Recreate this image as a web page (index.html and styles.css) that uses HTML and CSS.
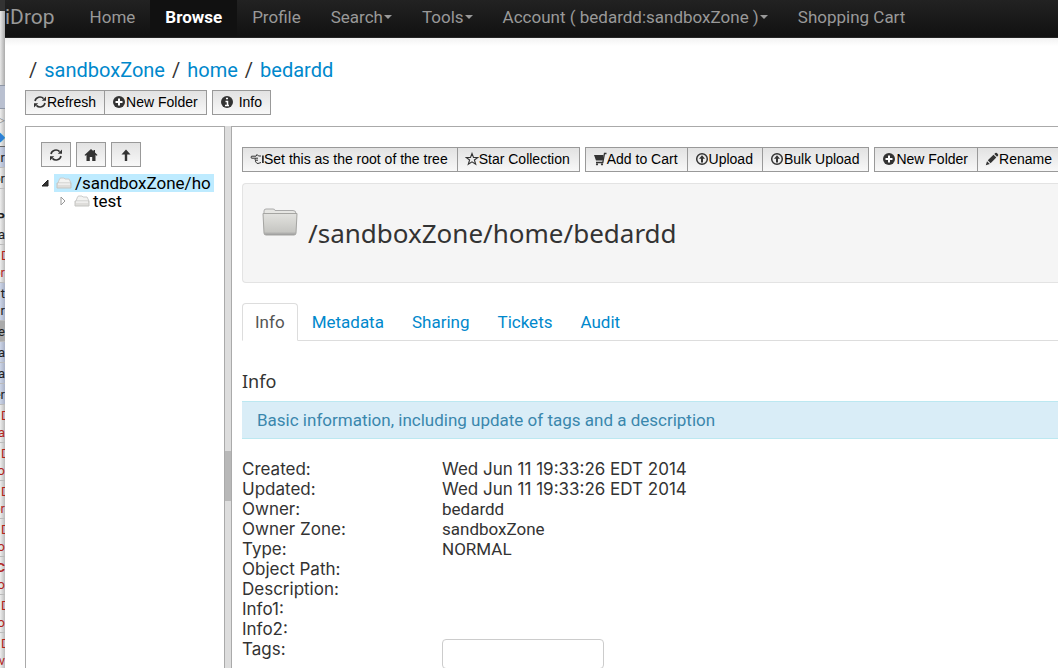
FILE: index.html
```html
<!DOCTYPE html>
<html lang="en">
<head>
<meta charset="utf-8">
<title>iDrop</title>
<link rel="stylesheet" href="styles.css">
</head>
<body>
<svg class="defs" width="0" height="0" aria-hidden="true">
  <defs>
    <symbol id="refresh" viewBox="0 0 14 14"><path d="M2 6A5 5 0 0 1 10.6 3.6M12 8A5 5 0 0 1 3.400 10.400" fill="none" stroke="#333" stroke-width="1.600"/><path d="M13 1.500v4.200H8.800zM1 12.500V8.300h4.200z" fill="#333"/></symbol>
    <symbol id="plus" viewBox="0 0 14 14"><circle cx="7" cy="7" r="6" fill="#333"/><path d="M7 3.500v7M3.500 7h7" stroke="#fff" stroke-width="2"/></symbol>
    <symbol id="info" viewBox="0 0 14 14"><circle cx="7" cy="7" r="6" fill="#333"/><path d="M6 3.500h2M5.500 6.500h2v4M5 10.500h4" fill="none" stroke="#fff" stroke-width="1.500"/></symbol>
    <symbol id="home" viewBox="0 0 14 14"><path d="M7 1L.5 7l.8.8L2.500 7v6h3.300V9h2.400v4h3.300V7l1.200.8.8-.8L11 4.500V2H9.500v1.200z" fill="#333"/></symbol>
    <symbol id="up" viewBox="0 0 14 14"><path d="M7 1.500l4.500 5H8.200V13H5.800V6.500H2.500z" fill="#333"/></symbol>
    <symbol id="hand" viewBox="0 0 14 14"><path d="M11 4H8.500L7 2.500 6 4.200H1.500Q.6 5 1.500 6.200H5.500M5.500 6.200Q4.500 7.200 5.500 8.200 5 9.200 6 10.200q.5 1.300 2 1.300L11 10.500M5.500 6.200H8M5.500 8.200H8" fill="none" stroke="#333"/><path d="M12 3.500h1.800v7.500H12z" fill="#333"/></symbol>
    <symbol id="star" viewBox="0 0 14 14"><path d="M7 1.500l1.500 4h4.300L9.400 8l1.300 4.300L7 9.800l-3.700 2.500L4.600 8 1.200 5.500h4.300z" fill="none" stroke="#333" stroke-width="1.100"/></symbol>
    <symbol id="cart" viewBox="0 0 14 14"><path d="M1 3h9.500L9.800 8.500H3z" fill="#333"/><path d="M13.500 1.500H11.500L9.800 10.500H3" fill="none" stroke="#333" stroke-width="1.300"/><circle cx="4" cy="12.300" r="1.100" fill="#333"/><circle cx="9" cy="12.300" r="1.100" fill="#333"/></symbol>
    <symbol id="upload" viewBox="0 0 14 14"><circle cx="7" cy="7" r="5.300" fill="none" stroke="#333" stroke-width="1.500"/><path d="M7 3.300l3 3.400H8v3.800H6V6.700H4z" fill="#333"/></symbol>
    <symbol id="pencil" viewBox="0 0 14 14"><path d="M.8 13.200l1.200-4L4.800 12zM2.800 8.300L8.500 2.700l2.800 2.800-5.700 5.700zM9.300 2l1-1q.8-.6 1.600.1l1.100 1.100q.6.800 0 1.500l-1 1z" fill="#333"/></symbol>
    <linearGradient id="folder-face" x2="0" y2="1"><stop stop-color="#e2e2df"/><stop offset=".85" stop-color="#c6c6c2"/><stop offset="1" stop-color="#999"/></linearGradient>
    <symbol id="folder" viewBox="0 0 36 28"><path d="M2 6V3q0-2 2-2h7q2 0 2 1.500h18q3 0 3 3V8H2z" fill="#e6e6e3" stroke="#aaa"/><path d="M1 5.500h34L34 25q0 2-2 2H4q-2 0-2-2z" fill="url(#folder-face)" stroke="#a5a5a2"/></symbol>
    <symbol id="open-folder" viewBox="0 0 16 12"><path d="M2 6l1.500-4q.3-1 1.500-1h3l1 1h4l2 4" fill="#f3f3f1" stroke="#ccc"/><path d="M1 6h14v5H1z" fill="#deddda" stroke="#c5c5c2"/><path d="M2 7h12" stroke="#fff"/></symbol>
  </defs>
</svg>
<div class="desktop">
  <aside class="behind" aria-hidden="true">
    <div class="behind-top"></div>
    <div class="behind-chrome"></div>
    <div class="behind-bar"></div>
    <div class="row tools"><span class="grey">▷</span><span class="blue">◆</span></div>
    <div class="row tint"><span>.r</span></div>
    <div class="row"><span>or</span></div>
    <div class="behind-gap"></div>
    <div class="row"><b>P</b><span>a</span></div>
    <div class="row red"><span class="start">D</span><span>or</span></div>
    <div class="row tint"><span>t</span><span>r</span></div>
    <div class="row dark"><span>e</span></div>
    <div class="row tint"><span>a</span></div>
    <div class="row tint"><span>a</span></div>
    <div class="row tint"><span>er</span></div>
    <div class="row red"><span class="start">D</span><span>da</span></div>
    <div class="row red"><span class="start">D</span><span>o</span></div>
    <div class="row red"><span class="start">D</span><span>or</span></div>
    <div class="row red"><span class="start">D</span><span>o</span></div>
    <div class="row red"><b>C</b><span>So</span></div>
    <div class="row red"><span class="start">D</span><span>o</span></div>
    <div class="row red"><span class="start">D</span><span>lv</span></div>
  </aside>
  <div class="window">
    <nav class="navbar">
      <a class="brand" href="#">iDrop</a>
      <a href="#">Home</a>
      <a class="active" href="#">Browse</a>
      <a href="#">Profile</a>
      <a href="#">Search<i class="caret"></i></a>
      <a href="#">Tools<i class="caret"></i></a>
      <a href="#">Account ( bedardd:sandboxZone )<i class="caret"></i></a>
      <a href="#">Shopping Cart</a>
    </nav>
    <main class="page">
      <div class="crumbs"><span>/</span><a href="#">sandboxZone</a><span>/</span><a href="#">home</a><span>/</span><a href="#">bedardd</a></div>
      <div class="toolbar">
        <div class="group">
          <button><svg><use href="#refresh"/></svg>Refresh</button>
          <button><svg><use href="#plus"/></svg>New Folder</button>
        </div>
        <div class="group"><button class="spaced"><svg><use href="#info"/></svg>Info</button></div>
      </div>
      <div class="split">
        <section class="tree-pane">
          <div class="tree-tools">
            <button aria-label="Refresh tree"><svg><use href="#refresh"/></svg></button>
            <button aria-label="Home"><svg><use href="#home"/></svg></button>
            <button aria-label="Up"><svg><use href="#up"/></svg></button>
          </div>
          <ul class="tree">
            <li><svg class="twist" viewBox="0 0 8 8"><path d="M7 1v6H1z" fill="#333" stroke="#222"/></svg><a class="selected" href="#"><svg><use href="#open-folder"/></svg>/sandboxZone/ho</a></li>
            <li class="child"><svg class="twist" viewBox="0 0 8 8"><path d="M2 0l4 4-4 4z" fill="#fff" stroke="#999"/></svg><a href="#"><svg><use href="#open-folder"/></svg>test</a></li>
          </ul>
        </section>
        <div class="splitter"><div class="grip"></div></div>
        <section class="detail">
          <div class="toolbar">
            <div class="group">
              <button><svg><use href="#hand"/></svg>Set this as the root of the tree</button>
              <button><svg><use href="#star"/></svg>Star Collection</button>
            </div>
            <div class="group">
              <button><svg><use href="#cart"/></svg>Add to Cart</button>
              <button><svg><use href="#upload"/></svg>Upload</button>
              <button><svg><use href="#upload"/></svg>Bulk Upload</button>
            </div>
            <div class="group">
              <button><svg><use href="#plus"/></svg>New Folder</button>
              <button><svg><use href="#pencil"/></svg>Rename</button>
            </div>
          </div>
          <header class="well"><svg><use href="#folder"/></svg><h1>/sandboxZone/home/bedardd</h1></header>
          <nav class="tabs">
            <a class="current" href="#">Info</a><a href="#">Metadata</a><a href="#">Sharing</a><a href="#">Tickets</a><a href="#">Audit</a>
          </nav>
          <h2>Info</h2>
          <p class="alert">Basic information, including update of tags and a description</p>
          <dl class="facts">
            <dt>Created:</dt><dd class="date">Wed Jun 11 19:33:26 EDT 2014</dd>
            <dt>Updated:</dt><dd class="date">Wed Jun 11 19:33:26 EDT 2014</dd>
            <dt>Owner:</dt><dd>bedardd</dd>
            <dt>Owner Zone:</dt><dd>sandboxZone</dd>
            <dt>Type:</dt><dd>NORMAL</dd>
            <dt>Object Path:</dt><dd></dd>
            <dt>Description:</dt><dd></dd>
            <dt>Info1:</dt><dd></dd>
            <dt>Info2:</dt><dd></dd>
            <dt><label for="tags">Tags:</label></dt><dd><input id="tags" type="text"></dd>
          </dl>
        </section>
      </div>
    </main>
  </div>
</div>
</body>
</html>
```
FILE: styles.css
```css
* { box-sizing: border-box; }
body { margin: 0; background: #fff; color: #333; font: 17px/20px Roboto, sans-serif; }
a { color: #08c; text-decoration: none; }
.defs { position: absolute; }
.desktop { display: flex; height: 100vh; overflow: hidden; }

/* Sliver of the window lying behind this one */
.behind { flex: none; width: 5px; overflow: hidden; background: linear-gradient(90deg, #eee, #bbb); color: #222; font-size: 13px; line-height: 17px; white-space: nowrap; }
.behind-top { height: 11px; background: #333; }
.behind-chrome { height: 74px; background: linear-gradient(90deg, #e8e8e8, #aaa); }
.behind-bar { height: 24px; border: solid #8e96a5; border-width: 1px 0; background: #b9c0d0; }
.behind-gap { height: 18px; }
.row { display: flex; flex-direction: column; align-items: flex-end; padding: 2px 0; border-bottom: 1px solid #bbb; }
.row .start { align-self: flex-start; padding-left: 1px; }
.row.tools { border-color: #666; }
.row.tint { background: linear-gradient(90deg, #ccd5e8, #a9b1c5); }
.row.dark { background: #aaa; }
.row.red { padding-bottom: 1px; color: #b3261e; }
.grey { color: #888; }
.blue { color: #2f7fd6; }
.row.tools, .row.tools ~ .row.tint, .row.tools ~ .row { padding-top: 2px; padding-bottom: 1px; }

.window { flex: 1; min-width: 0; }
.navbar { display: flex; height: 38px; overflow: hidden; border-bottom: 1px solid #252525; background: linear-gradient(#222, #111); white-space: nowrap; }
.navbar a { display: flex; align-items: center; padding: 0 15px 3px; color: #999; }
.navbar .brand { padding: 0 20px 3px 0; font-size: 21px; }
.navbar .active { background: #111; color: #fff; font-weight: bold; }
.caret { margin-left: 1px; border: 4px solid transparent; border-top-color: #999; border-bottom: 0; }

.page { padding: 22px 0 0 20px; background: linear-gradient(#f2f2f2, #fff 8px); }
.crumbs { display: flex; gap: 7px; padding-left: 4px; font-size: 20px; }
.toolbar { display: flex; gap: 5px; }
.crumbs + .toolbar { margin: 10px 0 11px; }
.group { display: flex; }
button { display: flex; align-items: center; justify-content: center; height: 25px; padding: 0 8px 1px 7px; border: 1px solid #999; background: linear-gradient(#e2e2e2, #f8f8f8); color: #000; font: 14px "Liberation Sans", sans-serif; white-space: nowrap; }
.detail button { padding-right: 9px; }
button + button { margin-left: -1px; }
button svg { flex: none; width: 14px; height: 14px; }
button.spaced { gap: 5px; }

.split { display: flex; min-height: 560px; }
.tree-pane { flex: none; width: 199px; padding: 15px 10px 0 15px; border: solid #aaa; border-width: 1px 0 0 1px; color: #000; }
.tree-tools { display: flex; gap: 5px; }
.tree-tools button { width: 30px; margin: 0; padding: 0; }
.tree { margin: 7px 0 0; padding: 0; list-style: none; line-height: 18px; }
.tree li { display: flex; align-items: center; gap: 5px; white-space: nowrap; }
.tree .child { padding-left: 18px; }
.tree a { display: flex; align-items: center; gap: 3px; padding-left: 2px; color: #000; }
.tree a svg { width: 16px; height: 12px; }
.tree .twist { flex: none; width: 8px; height: 8px; }
.tree .selected { flex: 1; background: #beebff; }
.splitter { flex: none; display: flex; flex-direction: column; justify-content: center; width: 8px; border: solid #aaa; border-width: 0 1px; background: #ddd; }
.grip { height: 50px; margin-top: 140px; background: #b8b8b8; }
.detail { flex: 1; min-width: 0; padding: 20px 0 0 10px; border-top: 1px solid #aaa; overflow: hidden; }

.well { display: flex; gap: 10px; height: 100px; margin-top: 11px; padding: 24px 19px; border: 1px solid #e3e3e3; border-right: 0; border-radius: 4px 0 0 4px; background: #f5f5f5; }
.well svg { width: 36px; height: 28px; }
h1 { margin: 9px 0 0; font: 26px/32px "Noto Sans", sans-serif; }
.tabs { display: flex; margin-top: 20px; border-bottom: 1px solid #ddd; }
.tabs a { margin-bottom: -1px; padding: 8px 13px; border: 1px solid transparent; }
.tabs .current { padding: 8px 12px; border-color: #ddd #ddd #fff; border-radius: 4px 4px 0 0; background: #fff; color: #555; }
h2 { margin: 30px 0 10px; font: 18px/20px "Noto Sans", sans-serif; }
.alert { margin: 0; padding: 8px 15px; border: solid #bce8f1; border-width: 1px 0; background: #d9edf7; color: #3a87ad; }
.facts { display: grid; grid-template-columns: 200px 1fr; grid-auto-rows: 20px; margin: 20px 0 0; }
.facts dt, .facts .date { font-family: Inter, sans-serif; }
.facts dd { margin: 0; }
.facts input { display: block; width: 162px; height: 30px; border: 1px solid #ccc; border-radius: 4px; background: #fff; font: inherit; }
```
